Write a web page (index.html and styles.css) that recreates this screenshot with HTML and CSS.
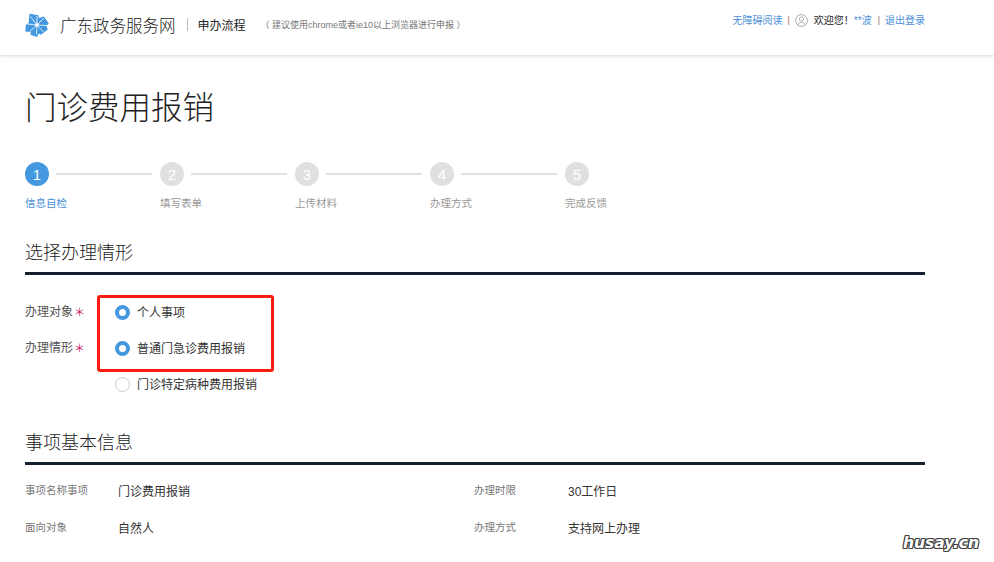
FILE: index.html
```html
<!DOCTYPE html>
<html lang="zh-CN">
<head>
<meta charset="utf-8">
<title>门诊费用报销</title>
<link rel="stylesheet" href="styles.css">
</head>
<body>
<header class="topbar">
  <div class="brand">
    <svg class="logo" width="24" height="24" viewBox="0 0 24 24" aria-hidden="true">
      <path fill="#4398e0" d="M4.500.8 13.500 2.300 13.800 5 19 3.500 23.800 10.500 21.500 13 22.800 16.500 16 21.800 13.800 20.500 12 24 5.500 21.800 5.800 19 .2 18.500 1 11.500 3.500 10.500z"/>
      <path d="M12 12 5.500 3.500M12 12 12 3M12 12 19 5M12 12 22 12.500M12 12 18.500 19M12 12 11.500 21.500M12 12 4.500 18.500M12 12 2 11" stroke="#fff" stroke-width=".8" fill="none"/>
      <circle cx="12" cy="12" r="1.800" fill="#fff"/>
    </svg>
    <span class="site-name">广东政务服务网</span>
    <span class="brand-sep"></span>
    <span class="flow-name">申办流程</span>
    <span class="hint">（ 建议使用chrome或者ie10以上浏览器进行申报 ）</span>
  </div>
  <div class="userbar">
    <a class="link">无障碍阅读</a>
    <span class="bar-sep">|</span>
    <svg class="avatar" width="13" height="13" viewBox="0 0 13 13" aria-hidden="true">
      <circle cx="6.500" cy="6.500" r="5.900" fill="none" stroke="#aaa"/>
      <circle cx="6.500" cy="5" r="2.100" fill="none" stroke="#aaa" stroke-width=".9"/>
      <path d="M2.800 11c.6-2 2-2.800 3.700-2.800s3.100.8 3.700 2.800" fill="none" stroke="#aaa" stroke-width=".9"/>
    </svg>
    <span class="welcome">欢迎您！<a class="link">**波</a></span>
    <span class="bar-sep">|</span>
    <a class="link">退出登录</a>
  </div>
</header>

<main class="content">
  <h1 class="page-title">门诊费用报销</h1>

  <ol class="steps">
    <li class="step active"><div class="step-head"><span class="dot">1</span><span class="line"></span></div><span class="step-label">信息自检</span></li>
    <li class="step"><div class="step-head"><span class="dot">2</span><span class="line"></span></div><span class="step-label">填写表单</span></li>
    <li class="step"><div class="step-head"><span class="dot">3</span><span class="line"></span></div><span class="step-label">上传材料</span></li>
    <li class="step"><div class="step-head"><span class="dot">4</span><span class="line"></span></div><span class="step-label">办理方式</span></li>
    <li class="step"><div class="step-head"><span class="dot">5</span></div><span class="step-label">完成反馈</span></li>
  </ol>

  <section class="situation">
    <h2 class="section-title">选择办理情形</h2>
    <div class="form-row">
      <span class="form-label">办理对象<i class="req">＊</i></span>
      <div class="options">
        <label class="option"><span class="radio on"></span>个人事项</label>
      </div>
    </div>
    <div class="form-row">
      <span class="form-label">办理情形<i class="req">＊</i></span>
      <div class="options">
        <label class="option"><span class="radio on"></span>普通门急诊费用报销</label>
        <label class="option"><span class="radio"></span>门诊特定病种费用报销</label>
      </div>
    </div>
    <div class="highlight"></div>
  </section>

  <section class="basic">
    <h2 class="section-title">事项基本信息</h2>
    <dl class="info-grid">
      <div class="info"><dt>事项名称事项</dt><dd>门诊费用报销</dd></div>
      <div class="info"><dt>办理时限</dt><dd>30工作日</dd></div>
      <div class="info"><dt>面向对象</dt><dd>自然人</dd></div>
      <div class="info"><dt>办理方式</dt><dd>支持网上办理</dd></div>
    </dl>
  </section>
</main>

<div class="watermark">husay.cn</div>
</body>
</html>
```

FILE: styles.css
```css
* { box-sizing: border-box; }
html, body { margin: 0; height: 100%; overflow: hidden; }
body {
  width: 994px;
  height: 562px;
  background: #fff;
  color: #222;
  font-family: "Liberation Sans", "Noto Sans CJK SC", sans-serif;
  font-size: 12px;
  position: relative;
}
.topbar {
  height: 55px;
  padding: 0 69px 0 25px;
  display: flex;
  justify-content: space-between;
  align-items: flex-start;
  background: #fff;
  box-shadow: 0 1px 3px rgba(0,0,0,.16);
}
.brand { display: flex; align-items: center; height: 49px; }
.logo { margin-right: 11px; flex: none; }
.site-name { font-size: 16.500px; font-weight: 300; color: #222; }
.brand-sep { width: 1px; height: 13px; background: #bbb; margin: 0 10px 0 11px; }
.flow-name { font-size: 12px; color: #222; }
.hint { font-size: 9px; color: #777; margin-left: 15px; }
.userbar { display: flex; align-items: center; height: 39px; font-size: 10px; color: #222; }
.link { color: #4a90d9; }
.bar-sep { color: #a66; margin: 0 5px; font-size: 9px; }
.avatar { margin: 1px 6px 0 0; }
.welcome { margin-right: 1px; }

.content { padding: 0 69px 0 25px; }
.page-title {
  margin: 32px 0 0;
  height: 42px;
  line-height: 42px;
  font-size: 31.500px;
  font-weight: 300;
  color: #222;
}
.steps {
  list-style: none;
  margin: 33px 0 0;
  padding: 0;
  display: flex;
}
.step { width: 135px; }
.step-head { display: flex; align-items: center; height: 24px; }
.dot {
  width: 24px; height: 24px; border-radius: 50%;
  background: #e0e0e0; color: #fff;
  display: flex; align-items: center; justify-content: center;
  font-size: 15px; flex: none;
}
.line { width: 96px; height: 2px; background: #e0e0e0; margin-left: 7px; }
.step-label { display: block; margin-top: 10px; line-height: 15px; font-size: 10.500px; color: #999; }
.step.active .dot { background: #4398e0; }
.step.active .step-label { color: #4a90d9; }

.situation { position: relative; margin-top: 28px; }
.section-title {
  margin: 0;
  height: 36px;
  line-height: 28px;
  font-size: 18px;
  font-weight: 300;
  color: #222;
  border-bottom: 3px solid #14202e;
}
.form-row { display: flex; }
.form-row:first-of-type { margin-top: 18px; }
.form-label { width: 90px; flex: none; color: #555; line-height: 18px; padding-top: 10px; }
.req { color: #c8185e; font-style: normal; font-size: 11px; margin-left: 1px; }
.options { display: flex; flex-direction: column; }
.option { display: flex; align-items: center; height: 36px; color: #333; }
.radio {
  width: 15px; height: 15px; border-radius: 50%;
  border: 1px solid #ccc; margin: 3px 7px 0 0; background: #fff; flex: none;
}
.radio.on { border: 4px solid #4398e0; }
.highlight {
  position: absolute;
  left: 72px; top: 56px;
  width: 177px; height: 77px;
  border: 3px solid #fb1c10;
  border-radius: 3px;
}

.basic { margin-top: 28px; }
.info-grid {
  margin: 0;
  padding-top: 7px;
  display: grid;
  grid-template-columns: 449px 1fr;
}
.info { display: flex; height: 37px; align-items: center; }
.info dt { width: 93px; font-size: 10.500px; color: #777; margin-top: -2px; }
.info:nth-child(even) dt { width: 94px; }
.info dd { margin: 0; color: #333; }

.watermark {
  position: absolute;
  right: 15px; bottom: 10px;
  font: italic 700 15.500px "DejaVu Sans", sans-serif;
  color: #fff;
  text-shadow: 1px 0 0 #444, -1px 0 0 #444, 0 1px 0 #444, 0 -1px 0 #444, 1px 1px 0 #444, -1px -1px 0 #444, 1px -1px 0 #444, -1px 1px 0 #444;
}
```
